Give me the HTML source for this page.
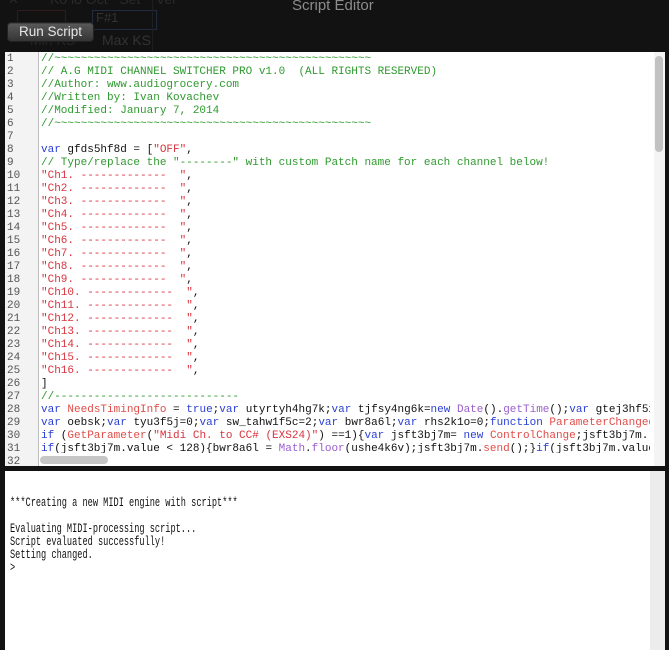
<!DOCTYPE html>
<html><head><meta charset="utf-8"><style>
*{margin:0;padding:0;box-sizing:border-box}
body{width:669px;height:650px;background:#121212;position:relative;overflow:hidden;font-family:"Liberation Sans",sans-serif}
.title{position:absolute;left:292px;top:-3px;color:#8c8c8c;font-size:15px}
.btn{position:absolute;left:7px;top:22px;width:87px;height:20px;border-radius:4px;background:linear-gradient(#5a5a5a,#343434);border:1px solid #222;color:#e6e6e6;font-size:13.5px;text-align:center;line-height:18px;box-shadow:0 1px 0 #444 inset}
.dim{position:absolute;color:#2a2a2a;font-size:14px}
.box{position:absolute;border:1px solid #2a2a2a}
.editor{position:absolute;left:5px;top:52px;width:660px;height:414px;background:#fff;overflow:hidden}
.gutter{position:absolute;left:0;top:0;width:34px;height:414px;background:#f3f3f3;border-right:1px solid #bdbdbd}
.nums,.code{position:absolute;top:1px;font-family:"Liberation Mono",monospace;font-size:11px;line-height:13px;white-space:pre}
.nums{left:2px;color:#555}
.code{left:36px;width:609px;overflow:hidden;color:#111}
.c{color:#2f9a2f}.s{color:#d8343f}.k{color:#2a3fd2}.f{color:#e04c48}.p{color:#9a5fcf}
.vs{position:absolute;left:649px;top:0;width:11px;height:414px;background:#f4f4f4}
.vs div{position:absolute;left:1px;top:4px;width:8px;height:96px;border-radius:4px;background:#c2c2c2}
.hs{position:absolute;left:35px;top:401px;width:614px;height:13px;background:#fff}
.hs div{position:absolute;left:0;top:3px;width:68px;height:8px;border-radius:4px;background:#c6c6c6}
.console{position:absolute;left:5px;top:471px;width:660px;height:179px;background:#fff}
.console .vs2{position:absolute;left:645px;top:0;width:15px;height:179px;background:#ececec}
.ctext{position:absolute;left:5px;top:26px;font-family:"Liberation Mono",monospace;font-size:12.5px;line-height:13px;white-space:pre;color:#111;transform:scaleX(0.69);transform-origin:0 0}
</style></head><body>
<div class="dim" style="left:8px;top:-8px;font-size:13px">✕</div>
<div class="dim" style="left:50px;top:-9px">Ko lo Oct &nbsp; Set &nbsp; &nbsp;Vel</div>
<div class="box" style="left:17px;top:10px;width:49px;height:19px;border-color:#301c1c"></div>
<div class="box" style="left:92px;top:10px;width:65px;height:20px;border-color:#222c40"></div>
<div class="dim" style="left:96px;top:10px;font-size:13px;color:#333">F#1</div>
<div class="dim" style="left:102px;top:32px;color:#333">Max KS</div>
<div class="dim" style="left:30px;top:32px;color:#262626">Min KS</div>
<div style="position:absolute;left:152px;top:0;width:1px;height:52px;background:#1e1e1e"></div>
<div class="title">Script Editor</div>
<div class="btn">Run Script</div>
<div class="editor">
<div class="gutter"></div>
<div class="nums">1
2
3
4
5
6
7
8
9
10
11
12
13
14
15
16
17
18
19
20
21
22
23
24
25
26
27
28
29
30
31
32</div>
<div class="code"><span class="c">//~~~~~~~~~~~~~~~~~~~~~~~~~~~~~~~~~~~~~~~~~~~~~~~~
// A.G MIDI CHANNEL SWITCHER PRO v1.0  (ALL RIGHTS RESERVED)
//Author: www.audiogrocery.com
//Written by: Ivan Kovachev
//Modified: January 7, 2014
//~~~~~~~~~~~~~~~~~~~~~~~~~~~~~~~~~~~~~~~~~~~~~~~~</span>

<span class="k">var</span> gfds5hf8d = [<span class="s">"OFF"</span>,
<span class="c">// Type/replace the "--------" with custom Patch name for each channel below!</span>
<span class="s">"Ch1. -------------  "</span>,
<span class="s">"Ch2. -------------  "</span>,
<span class="s">"Ch3. -------------  "</span>,
<span class="s">"Ch4. -------------  "</span>,
<span class="s">"Ch5. -------------  "</span>,
<span class="s">"Ch6. -------------  "</span>,
<span class="s">"Ch7. -------------  "</span>,
<span class="s">"Ch8. -------------  "</span>,
<span class="s">"Ch9. -------------  "</span>,
<span class="s">"Ch10. -------------  "</span>,
<span class="s">"Ch11. -------------  "</span>,
<span class="s">"Ch12. -------------  "</span>,
<span class="s">"Ch13. -------------  "</span>,
<span class="s">"Ch14. -------------  "</span>,
<span class="s">"Ch15. -------------  "</span>,
<span class="s">"Ch16. -------------  "</span>,
]
<span class="c">//----------------------------</span>
<span class="k">var</span> <span class="f">NeedsTimingInfo</span> = <span class="k">true</span>;<span class="k">var</span> utyrtyh4hg7k;<span class="k">var</span> tjfsy4ng6k=<span class="k">new</span> <span class="p">Date</span>().<span class="p">getTime</span>();<span class="k">var</span> gtej3hf5x
<span class="k">var</span> oebsk;<span class="k">var</span> tyu3f5j=0;<span class="k">var</span> sw_tahw1f5c=2;<span class="k">var</span> bwr8a6l;<span class="k">var</span> rhs2k1o=0;<span class="k">function</span> <span class="f">ParameterChanged</span>
<span class="k">if</span> (<span class="f">GetParameter</span>(<span class="s">"Midi Ch. to CC# (EXS24)"</span>) ==1){<span class="k">var</span> jsft3bj7m= <span class="k">new</span> <span class="f">ControlChange</span>;jsft3bj7m.
<span class="k">if</span>(jsft3bj7m.value &lt; 128){bwr8a6l = <span class="p">Math</span>.<span class="p">floor</span>(ushe4k6v);jsft3bj7m.<span class="f">send</span>();}<span class="k">if</span>(jsft3bj7m.value</div>
<div class="hs"><div></div></div>
<div class="vs"><div></div></div>
</div>
<div class="console"><div class="vs2"></div>
<div class="ctext">***Creating a new MIDI engine with script***

Evaluating MIDI-processing script...
Script evaluated successfully!
Setting changed.
&gt;</div></div>
</body></html>
